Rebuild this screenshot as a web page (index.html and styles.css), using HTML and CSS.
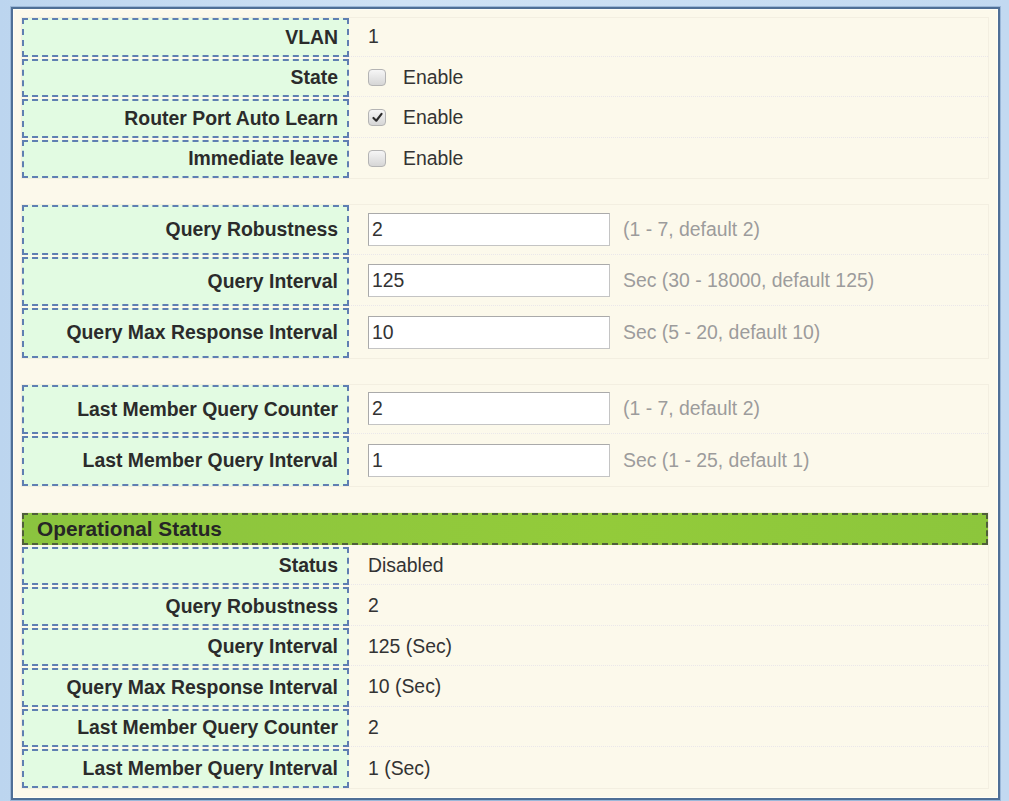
FILE: index.html
```html
<!DOCTYPE html>
<html lang="en">
<head>
  <meta charset="UTF-8">
  <title>IGMP Snooping VLAN Setting</title>
  <link rel="stylesheet" href="styles.css">
</head>
<body>
  <div class="window">
    <div class="panel">
      <!-- basic settings -->
      <div class="section short">
        <div class="row">
          <div class="label">VLAN</div>
          <div class="value">1</div>
        </div>
        <div class="row">
          <div class="label">State</div>
          <div class="value"><span class="check"></span>Enable</div>
        </div>
        <div class="row">
          <div class="label">Router Port Auto Learn</div>
          <div class="value"><span class="check on"><svg viewBox="0 0 16 16" width="13" height="13"><path d="M3 8.5 L6.5 12 L13 3.5" fill="none" stroke="#2b2b2b" stroke-width="2.6" stroke-linecap="round" stroke-linejoin="round"/></svg></span>Enable</div>
        </div>
        <div class="row">
          <div class="label">Immediate leave</div>
          <div class="value"><span class="check"></span>Enable</div>
        </div>
      </div>

      <!-- query timers -->
      <div class="section tall">
        <div class="row">
          <div class="label">Query Robustness</div>
          <div class="value"><input class="field" type="text" value="2"><span class="hint">(1 - 7, default 2)</span></div>
        </div>
        <div class="row">
          <div class="label">Query Interval</div>
          <div class="value"><input class="field" type="text" value="125"><span class="hint">Sec (30 - 18000, default 125)</span></div>
        </div>
        <div class="row">
          <div class="label">Query Max Response Interval</div>
          <div class="value"><input class="field" type="text" value="10"><span class="hint">Sec (5 - 20, default 10)</span></div>
        </div>
      </div>

      <!-- last member -->
      <div class="section tall">
        <div class="row">
          <div class="label">Last Member Query Counter</div>
          <div class="value"><input class="field" type="text" value="2"><span class="hint">(1 - 7, default 2)</span></div>
        </div>
        <div class="row">
          <div class="label">Last Member Query Interval</div>
          <div class="value"><input class="field" type="text" value="1"><span class="hint">Sec (1 - 25, default 1)</span></div>
        </div>
      </div>

      <!-- operational status -->
      <div class="section short status">
        <div class="section-title">Operational Status</div>
        <div class="row">
          <div class="label">Status</div>
          <div class="value">Disabled</div>
        </div>
        <div class="row">
          <div class="label">Query Robustness</div>
          <div class="value">2</div>
        </div>
        <div class="row">
          <div class="label">Query Interval</div>
          <div class="value">125 (Sec)</div>
        </div>
        <div class="row">
          <div class="label">Query Max Response Interval</div>
          <div class="value">10 (Sec)</div>
        </div>
        <div class="row">
          <div class="label">Last Member Query Counter</div>
          <div class="value">2</div>
        </div>
        <div class="row">
          <div class="label">Last Member Query Interval</div>
          <div class="value">1 (Sec)</div>
        </div>
      </div>
    </div>
  </div>
</body>
</html>
```

FILE: styles.css
```css
html, body {
  margin: 0; padding: 0;
  width: 1009px; height: 801px;
  overflow: hidden;
  background: linear-gradient(90deg, #bcd5ef, #cfe2f5 40%, #c2d9f1);
  font-family: "Liberation Sans", Arial, sans-serif;
  color: #333;
}
.window {
  box-sizing: border-box;
  margin: 7px 9px 0 11px;
  height: 793px;
  border: 2px solid #4f6f96;
  box-shadow: 0 0 0 1px #9bb8d9, inset 0 0 0 1px #fffef6;
  background: #fcf9eb;
}
.panel {
  display: flex; flex-direction: column;
  gap: 27px;
  padding: 9px 10px 0 9px;
}
.section {
  display: flex; flex-direction: column;
  gap: 2px;
  outline: 1px solid #f3efe1;
}
.row { display: flex; }
.short .row { height: 38.5px; }
.tall .row { height: 49.5px; }
.label {
  box-sizing: border-box;
  width: 327px; flex: none;
  display: flex; align-items: center; justify-content: flex-end;
  padding-right: 9px;
  background: #e2fbe2;
  border: 2px dashed #5f7fb2;
  font-size: 19.4px; font-weight: bold; color: #2b2b2b;
}
.value {
  flex: 1;
  display: flex; align-items: center;
  padding-left: 19px;
  font-size: 19.4px; color: #333;
  border-bottom: 1px dotted #eae7ea;
}
.row:last-child .value { border-bottom: none; }
.check {
  box-sizing: border-box;
  width: 18px; height: 17px;
  margin-right: 17px;
  display: inline-flex; align-items: center; justify-content: center;
  border: 1px solid #b4b4b4; border-radius: 4px;
  background: linear-gradient(#f6f6f6, #d6d6d6);
}
.field {
  box-sizing: border-box;
  width: 242px; height: 33px;
  margin: 0 13px 0 0; padding: 0 3px;
  border: 1px solid #c4c4c4; border-top-color: #aaa; border-left-color: #aaa;
  background: #fff;
  font-family: "Liberation Sans", Arial, sans-serif;
  font-size: 19.4px; color: #333;
  outline: none;
}
.hint { color: #9c9c9c; }
.section-title {
  box-sizing: border-box;
  height: 32px;
  display: flex; align-items: center;
  padding-left: 13px;
  background: linear-gradient(90deg, #8bc43f, #93cb3a 60%, #8cc63c);
  border: 2px dashed #4f5f3a;
  font-size: 20.8px; font-weight: bold; color: #262626;
}
```
